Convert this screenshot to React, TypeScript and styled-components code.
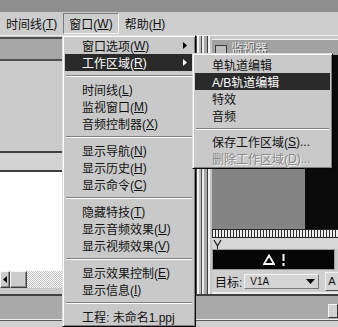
import styled, { createGlobalStyle } from 'styled-components';

const GlobalStyle = createGlobalStyle`
  html, body { margin: 0; padding: 0; background: #c9c9c9; }
  body { font-family: "Liberation Sans", "Noto Sans CJK SC", sans-serif; }
`;

type Item =
  | { kind: 'sep' }
  | { kind: 'item'; label: string; hotkey?: string; tail?: string; arrow?: boolean; active?: boolean; disabled?: boolean };

const windowMenu: Item[] = [
  { kind: 'item', label: '窗口选项', hotkey: 'W', arrow: true },
  { kind: 'item', label: '工作区域', hotkey: 'R', arrow: true, active: true },
  { kind: 'sep' },
  { kind: 'item', label: '时间线', hotkey: 'L' },
  { kind: 'item', label: '监视窗口', hotkey: 'M' },
  { kind: 'item', label: '音频控制器', hotkey: 'X' },
  { kind: 'sep' },
  { kind: 'item', label: '显示导航', hotkey: 'N' },
  { kind: 'item', label: '显示历史', hotkey: 'H' },
  { kind: 'item', label: '显示命令', hotkey: 'C' },
  { kind: 'sep' },
  { kind: 'item', label: '隐藏特技', hotkey: 'T' },
  { kind: 'item', label: '显示音频效果', hotkey: 'U' },
  { kind: 'item', label: '显示视频效果', hotkey: 'V' },
  { kind: 'sep' },
  { kind: 'item', label: '显示效果控制', hotkey: 'E' },
  { kind: 'item', label: '显示信息', hotkey: 'I' },
  { kind: 'sep' },
  { kind: 'item', label: '工程: 未命名1.ppj' },
];

const workspaceMenu: Item[] = [
  { kind: 'item', label: '单轨道编辑' },
  { kind: 'item', label: 'A/B轨道编辑', active: true },
  { kind: 'item', label: '特效' },
  { kind: 'item', label: '音频' },
  { kind: 'sep' },
  { kind: 'item', label: '保存工作区域', hotkey: 'S', tail: '...' },
  { kind: 'item', label: '删除工作区域', hotkey: 'D', tail: '...', disabled: true },
];

const Screen = styled.div`
  position: relative;
  width: 338px;
  height: 327px;
  overflow: hidden;
  display: flex;
  flex-direction: column;
  background: #c9c9c9;
  font-size: 12px;
  color: #111;
`;

const TopStrip = styled.div`
  height: 12px;
  background: #8e8e8e;
`;

const MenuBar = styled.div`
  height: 23px;
  display: flex;
  align-items: stretch;
  background: #cdcdcd;
  box-sizing: border-box;
  padding: 1px 0 1px;
`;

const BarItem = styled.div<{ $pressed?: boolean }>`
  display: flex;
  align-items: center;
  padding: 0 5px;
  border: 1px solid ${p => (p.$pressed ? '#7a7a7a' : 'transparent')};
  border-right-color: ${p => (p.$pressed ? '#f4f4f4' : 'transparent')};
  border-bottom-color: ${p => (p.$pressed ? '#f4f4f4' : 'transparent')};
  white-space: nowrap;
`;

const Workspace = styled.div`
  height: 258px;
  display: flex;
  border-top: 1px solid #eeeeee;
`;

const LeftPane = styled.div`
  flex: 1;
  display: flex;
  flex-direction: column;
`;

const PaneTitle = styled.div`
  margin-top: 1px;
  height: 20px;
  background: #a7a7a7;
  border-top: 2px solid #4e4e4e;
  border-bottom: 2px solid #4e4e4e;
`;

const PaneBody = styled.div`
  height: 90px;
  background: #cbcbcb;
`;

const PaneBar = styled.div`
  height: 17px;
  background: #d3d3d3;
  border-top: 2px solid #3e3e3e;
  border-bottom: 2px solid #3e3e3e;
`;

const WhiteArea = styled.div`
  height: 99px;
  background: #ffffff;
`;

const ScrollBar = styled.div`
  height: 17px;
  display: flex;
  background-color: #ffffff;
  background-image: repeating-conic-gradient(#bdbdbd 0 25%, #ffffff 0 50%);
  background-size: 2px 2px;
`;

const ScrollButton = styled.div<{ $w: number }>`
  width: ${p => p.$w}px;
  box-sizing: border-box;
  display: flex;
  align-items: center;
  justify-content: flex-end;
  padding-right: 2px;
  background: #cccccc;
  border: 1px solid;
  border-color: #f6f6f6 #404040 #404040 #f6f6f6;
  box-shadow: inset -1px -1px #8a8a8a;
`;

const MonitorWindow = styled.div`
  width: 142px;
  display: flex;
`;

const SideRails = styled.div`
  width: 16px;
  flex-shrink: 0;
  background: linear-gradient(
    to right,
    #4a4a4a 0 1px,
    #f2f2f2 1px 3px,
    #b7b7b7 3px 5px,
    #505050 5px 6px,
    #ececec 6px 8px,
    #a8a8a8 8px 11px,
    #3c3c3c 11px 12px,
    #f0f0f0 12px 14px,
    #c4c4c4 14px 16px
  );
`;

const MonitorBody = styled.div`
  flex: 1;
  display: flex;
  flex-direction: column;
  min-width: 0;
  overflow: hidden;
`;

const MonitorTitle = styled.div`
  height: 15px;
  margin-top: 3px;
  display: flex;
  align-items: flex-end;
  gap: 4px;
  padding-left: 3px;
  background: #a2a2a2;
  border-top: 1px solid #f0f0f0;
  color: #ececec;
  text-shadow: 1px 1px 0 #555;
  font-size: 12px;
  line-height: 12px;
  overflow: hidden;
`;

const VideoRow = styled.div`
  height: 175px;
  display: flex;
`;

const VideoFrame = styled.div`
  width: 93px;
  background: #848484;
`;

const VideoBlack = styled.div`
  flex: 1;
  background: #0a0a0a;
`;

const Ruler = styled.div`
  height: 7px;
  border-top: 1px solid #222;
  border-bottom: 1px solid #222;
  background: repeating-linear-gradient(to right, #2a2a2a 0 1px, #ededed 1px 3px);
`;

const MarkerRow = styled.div`
  height: 11px;
  padding-left: 1px;
  background: #d7d7d7;
`;

const StatusBar = styled.div`
  height: 19px;
  margin-right: 3px;
  display: flex;
  align-items: center;
  justify-content: center;
  gap: 7px;
  background: #050505;
  border: 1px solid #9a9a9a;
`;

const TargetRow = styled.div`
  height: 22px;
  display: flex;
  align-items: center;
  gap: 2px;
  padding-left: 3px;
  background: #cfcfcf;
  border-bottom: 2px solid #ededed;
  white-space: nowrap;
`;

const TargetLabel = styled.span`
  flex-shrink: 0;
`;

const Select = styled.div`
  width: 75px;
  height: 15px;
  flex-shrink: 0;
  box-sizing: border-box;
  display: flex;
  align-items: center;
  justify-content: space-between;
  padding: 0 3px 0 5px;
  background: #d4d4d4;
  border: 1px solid;
  border-color: #f2f2f2 #7a7a7a #7a7a7a #f2f2f2;
  font-size: 10px;
`;

const SmallButton = styled.div`
  flex-shrink: 0;
  margin-left: 4px;
  width: 12px;
  height: 17px;
  display: flex;
  align-items: center;
  padding-left: 2px;
  background: #d4d4d4;
  border: 1px solid;
  border-color: #f2f2f2 #555 #555 #f2f2f2;
  font-size: 11px;
`;

const BottomWindow = styled.div`
  flex: 1;
  display: flex;
  flex-direction: column;
  border-top: 2px solid #3f3f3f;
`;

const BottomTitle = styled.div`
  height: 23px;
  display: flex;
  align-items: flex-end;
  justify-content: flex-end;
  background: #a9a9a9;
  border-bottom: 1px solid #efefef;
`;

const MiniButton = styled.div`
  width: 8px;
  height: 12px;
  margin-bottom: 1px;
  background: #d0d0d0;
  border: 1px solid;
  border-color: #f4f4f4 #333 #333 #f4f4f4;
`;

const BottomBody = styled.div`
  flex: 1;
  background: #cfcfcf;
  border-top: 1px solid #5a5a5a;
`;

const MenuPanel = styled.div<{ $left: number; $top: number; $width: number; $pad: string }>`
  position: absolute;
  left: ${p => p.$left}px;
  top: ${p => p.$top}px;
  width: ${p => p.$width}px;
  box-sizing: border-box;
  padding: ${p => p.$pad};
  background: #c9c9c9;
  border: 1px solid;
  border-color: #dedede #050505 #050505 #dedede;
  box-shadow: inset 1px 1px #ffffff, inset -1px -1px #808080;
`;

const MenuRow = styled.div<{ $active?: boolean; $disabled?: boolean }>`
  position: relative;
  height: 17px;
  display: flex;
  align-items: center;
  padding-left: 17px;
  white-space: nowrap;
  background: ${p => (p.$active ? '#2a2a2a' : 'transparent')};
  color: ${p => (p.$active ? '#ffffff' : p.$disabled ? '#878787' : '#111111')};
  text-shadow: ${p => (p.$disabled ? '1px 1px 0 #f3f3f3' : 'none')};
`;

const Separator = styled.div<{ $h: number }>`
  height: ${p => p.$h}px;
  display: flex;
  align-items: center;
  &::after {
    content: '';
    flex: 1;
    margin: 0 1px;
    border-top: 1px solid #808080;
    border-bottom: 1px solid #ffffff;
  }
`;

const Arrow = styled.svg`
  position: absolute;
  right: 6px;
  top: 5px;
`;

function Menu({ items, left, top, width, pad, sep }: { items: Item[]; left: number; top: number; width: number; pad: string; sep: number }) {
  return (
    <MenuPanel $left={left} $top={top} $width={width} $pad={pad}>
      {items.map((it, i) =>
        it.kind === 'sep' ? (
          <Separator key={i} $h={sep} />
        ) : (
          <MenuRow key={i} $active={it.active} $disabled={it.disabled}>
            {it.label}
            {it.hotkey && (
              <>
                (<u>{it.hotkey}</u>)
              </>
            )}
            {it.tail}
            {it.arrow && (
              <Arrow width="4" height="7" viewBox="0 0 4 7">
                <polygon points="0,0 4,3.5 0,7" fill={it.active ? '#fff' : '#000'} />
              </Arrow>
            )}
          </MenuRow>
        )
      )}
    </MenuPanel>
  );
}

export default function App() {
  return (
    <>
      <GlobalStyle />
      <Screen>
        <TopStrip />
        <MenuBar>
          <BarItem>时间线(<u>T</u>)</BarItem>
          <BarItem $pressed>窗口(<u>W</u>)</BarItem>
          <BarItem>帮助(<u>H</u>)</BarItem>
        </MenuBar>

        <Workspace>
          <LeftPane>
            <PaneTitle />
            <PaneBody />
            <PaneBar />
            <WhiteArea />
            <ScrollBar>
              <ScrollButton $w={10}>
                <svg width="4" height="7" viewBox="0 0 4 7">
                  <polygon points="4,0 0,3.5 4,7" fill="#000" />
                </svg>
              </ScrollButton>
              <ScrollButton $w={17} />
            </ScrollBar>
          </LeftPane>

          <MonitorWindow>
            <SideRails />
            <MonitorBody>
              <MonitorTitle>
                <svg width="12" height="10" viewBox="0 0 12 10">
                  <rect x="0.5" y="0.5" width="11" height="9" fill="#bdbdbd" stroke="#3a3a3a" />
                </svg>
                <span>监视器</span>
              </MonitorTitle>
              <VideoRow>
                <VideoFrame />
                <VideoBlack />
              </VideoRow>
              <Ruler />
              <MarkerRow>
                <svg width="9" height="10" viewBox="0 0 9 10">
                  <path d="M1 1 L4.5 7 L8 1" fill="none" stroke="#222" strokeWidth="1.3" />
                  <line x1="4.5" y1="7" x2="4.5" y2="10" stroke="#222" />
                </svg>
              </MarkerRow>
              <StatusBar>
                <svg width="12" height="11" viewBox="0 0 12 11">
                  <polygon points="6,1.5 11,10 1,10" fill="none" stroke="#fff" strokeWidth="1.8" />
                </svg>
                <svg width="3" height="12" viewBox="0 0 3 12">
                  <rect x="0.5" y="0" width="2" height="7" fill="#fff" />
                  <rect x="0.5" y="9" width="2" height="3" fill="#fff" />
                </svg>
              </StatusBar>
              <TargetRow>
                <TargetLabel>目标:</TargetLabel>
                <Select>
                  <span>V1A</span>
                  <svg width="9" height="5" viewBox="0 0 9 5">
                    <polygon points="0,0 9,0 4.5,5" fill="#000" />
                  </svg>
                </Select>
                <SmallButton>A</SmallButton>
              </TargetRow>
            </MonitorBody>
          </MonitorWindow>
        </Workspace>

        <BottomWindow>
          <BottomTitle>
            <MiniButton />
          </BottomTitle>
          <BottomBody />
        </BottomWindow>

        <Menu items={windowMenu} left={62} top={35} width={134} pad="1px 2px" sep={10} />
        <Menu items={workspaceMenu} left={192} top={53} width={141} pad="2px 2px 1px" sep={9} />
      </Screen>
    </>
  );
}
